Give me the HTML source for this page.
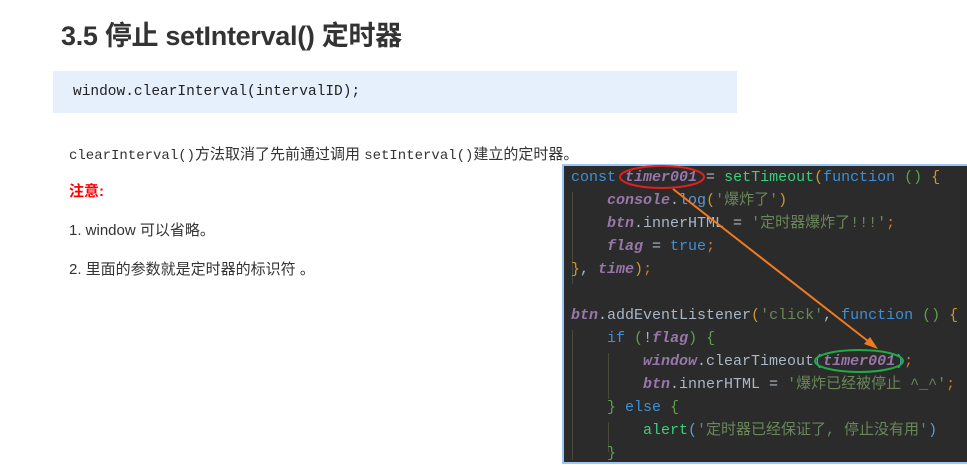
<!DOCTYPE html>
<html><head><meta charset="utf-8"><style>
body{margin:0;width:967px;height:452px;background:#fff;position:relative;overflow:hidden;font-family:"Liberation Sans","Noto Sans CJK SC",sans-serif;color:#333}
.h{position:absolute;left:61px;top:14px;font-size:27px;font-weight:bold;color:#333;letter-spacing:-0.3px}
.cb{position:absolute;left:53px;top:71px;width:684px;height:42px;background:#e6effc}
.cb span{position:absolute;left:20px;top:13px;font:14.5px "Liberation Mono","Noto Sans CJK SC",monospace;color:#222}
.t{position:absolute;left:69px;font-size:15px;color:#333}
.m{font-family:"Liberation Mono",monospace;font-size:14px}
.code{position:absolute;left:562px;top:164px;width:410px;height:300px;background:#2b2b2b;border:2px solid #9cc7f5;box-sizing:border-box}
.code pre{margin:0;position:absolute;left:7px;top:0px;font:15px/23px "Liberation Mono","Noto Sans CJK SC",monospace;color:#a9b7c6}
.k{color:#3f8fd6}.v{color:#9876aa;font-style:italic;font-weight:bold}.f{color:#3ad07a}.s{color:#6a8759}.p{color:#cc9a2a}.g{color:#5ea04a}.o{color:#cc7832}.n{color:#5b9ad3}
.gl{position:absolute;border-left:1px solid #4a4a3a}
</style></head><body>
<div class="h">3.5 停止 setInterval() 定时器</div>
<div class="cb"><span>window.clearInterval(intervalID);</span></div>
<div class="t" style="top:143px"><span class="m">clearInterval()</span>方法取消了先前通过调用 <span class="m">setInterval()</span>建立的定时器。</div>
<div class="t" style="top:180px;color:#f00;font-weight:bold">注意:</div>
<div class="t" style="top:219px">1. window 可以省略。</div>
<div class="t" style="top:258px">2. 里面的参数就是定时器的标识符 。</div>
<div class="code">
<div class="gl" style="left:8px;top:26px;height:92px"></div>
<div class="gl" style="left:8px;top:164px;height:130px"></div>
<div class="gl" style="left:44px;top:187px;height:46px"></div>
<div class="gl" style="left:44px;top:256px;height:30px"></div>
<pre><span class="k">const</span> <span class="v">timer001</span> = <span class="f">setTimeout</span><span class="p">(</span><span class="k">function</span> <span class="g">()</span> <span class="p">{</span>
    <span class="v">console</span>.<span class="n">log</span><span class="p">(</span><span class="s">'爆炸了'</span><span class="p">)</span>
    <span class="v">btn</span>.innerHTML = <span class="s">'定时器爆炸了!!!'</span><span class="o">;</span>
    <span class="v">flag</span> = <span class="k">true</span><span class="o">;</span>
<span class="p">}</span>, <span class="v">time</span><span class="p">)</span><span class="o">;</span>

<span class="v">btn</span>.addEventListener<span class="p">(</span><span class="s">'click'</span>, <span class="k">function</span> <span class="g">()</span> <span class="p">{</span>
    <span class="k">if</span> <span class="g">(</span>!<span class="v">flag</span><span class="g">)</span> <span class="g">{</span>
        <span class="v">window</span>.clearTimeout<span class="n">(</span><span class="v">timer001</span><span class="n">)</span><span class="o">;</span>
        <span class="v">btn</span>.innerHTML = <span class="s">'爆炸已经被停止 ^_^'</span><span class="o">;</span>
    <span class="g">}</span> <span class="k">else</span> <span class="g">{</span>
        <span class="f">alert</span><span class="n">(</span><span class="s">'定时器已经保证了, 停止没有用'</span><span class="n">)</span>
    <span class="g">}</span>
</pre></div>
<svg style="position:absolute;left:0;top:0" width="967" height="452">
<ellipse cx="662" cy="177" rx="42" ry="11" fill="none" stroke="#e02020" stroke-width="2"/>
<ellipse cx="859" cy="361" rx="44" ry="11" fill="none" stroke="#22aa44" stroke-width="2"/>
<line x1="673" y1="189" x2="873" y2="345" stroke="#f07a20" stroke-width="2"/>
<path d="M878 349 L864 344 L870 337 Z" fill="#f07a20"/>
</svg>
</body></html>
